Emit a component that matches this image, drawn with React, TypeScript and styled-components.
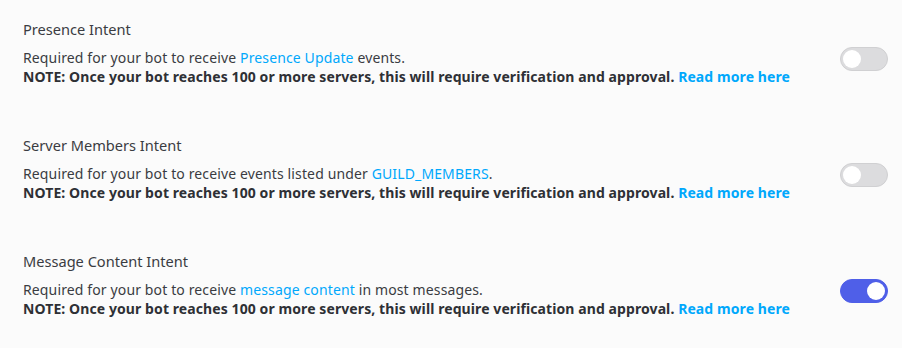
import React, { useState } from 'react';
import styled, { createGlobalStyle } from 'styled-components';

const Global = createGlobalStyle`
  html, body {
    margin: 0;
    padding: 0;
    background: #fbfbfb;
  }
  body {
    font-family: 'Noto Sans', 'Open Sans', sans-serif;
    color: #313338;
  }
`;

const Page = styled.div`
  width: 902px;
  height: 348px;
  padding: 20px 14px 0 23px;
  box-sizing: border-box;
  display: flex;
  flex-direction: column;
  gap: 50px;
`;

const Intent = styled.section`
  display: grid;
  grid-template-columns: 1fr 48px;
  column-gap: 20px;
  row-gap: 10px;
  align-items: start;
`;

const Title = styled.div`
  grid-column: 1 / -1;
  font-size: 14.6px;
  line-height: 18px;
  color: #3a3c42;
`;

const Description = styled.div`
  font-size: 14px;
  line-height: 19px;
  letter-spacing: 0.13px;
  color: #3a3c42;
`;

const Note = styled.div`
  font-weight: 700;
  letter-spacing: 0.09px;
  color: #2e3035;
`;

const Link = styled.a`
  color: #00a8fc;
  text-decoration: none;
  cursor: pointer;
`;

const Track = styled.button<{ $on: boolean }>`
  width: 48px;
  height: 24px;
  margin-top: -1px;
  padding: 0;
  border-radius: 12px;
  border: 1px solid ${(p) => (p.$on ? '#4f5fe8' : '#d0d0d2')};
  background: ${(p) => (p.$on ? '#4f5fe8' : '#dcdcde')};
  position: relative;
  cursor: pointer;

  &::after {
    content: '';
    position: absolute;
    top: 2px;
    left: ${(p) => (p.$on ? '26px' : '2px')};
    width: 18px;
    height: 18px;
    border-radius: 50%;
    background: #ffffff;
  }
`;

interface IntentRowProps {
  title: string;
  before: string;
  link: string;
  after: string;
  initial: boolean;
}

const IntentRow: React.FC<IntentRowProps> = (props) => {
  const [on, setOn] = useState(props.initial);
  return (
    <Intent>
      <Title>{props.title}</Title>
      <Description>
        {props.before}
        <Link>{props.link}</Link>
        {props.after}
        <Note>
          NOTE: Once your bot reaches 100 or more servers, this will require verification and
          approval. <Link>Read more here</Link>
        </Note>
      </Description>
      <Track $on={on} onClick={() => setOn(!on)} aria-label={props.title} />
    </Intent>
  );
};

export default function App() {
  return (
    <>
      <Global />
      <Page>
        <IntentRow
          title="Presence Intent"
          before="Required for your bot to receive "
          link="Presence Update"
          after=" events."
          initial={false}
        />
        <IntentRow
          title="Server Members Intent"
          before="Required for your bot to receive events listed under "
          link="GUILD_MEMBERS"
          after="."
          initial={false}
        />
        <IntentRow
          title="Message Content Intent"
          before="Required for your bot to receive "
          link="message content"
          after=" in most messages."
          initial={true}
        />
      </Page>
    </>
  );
}
